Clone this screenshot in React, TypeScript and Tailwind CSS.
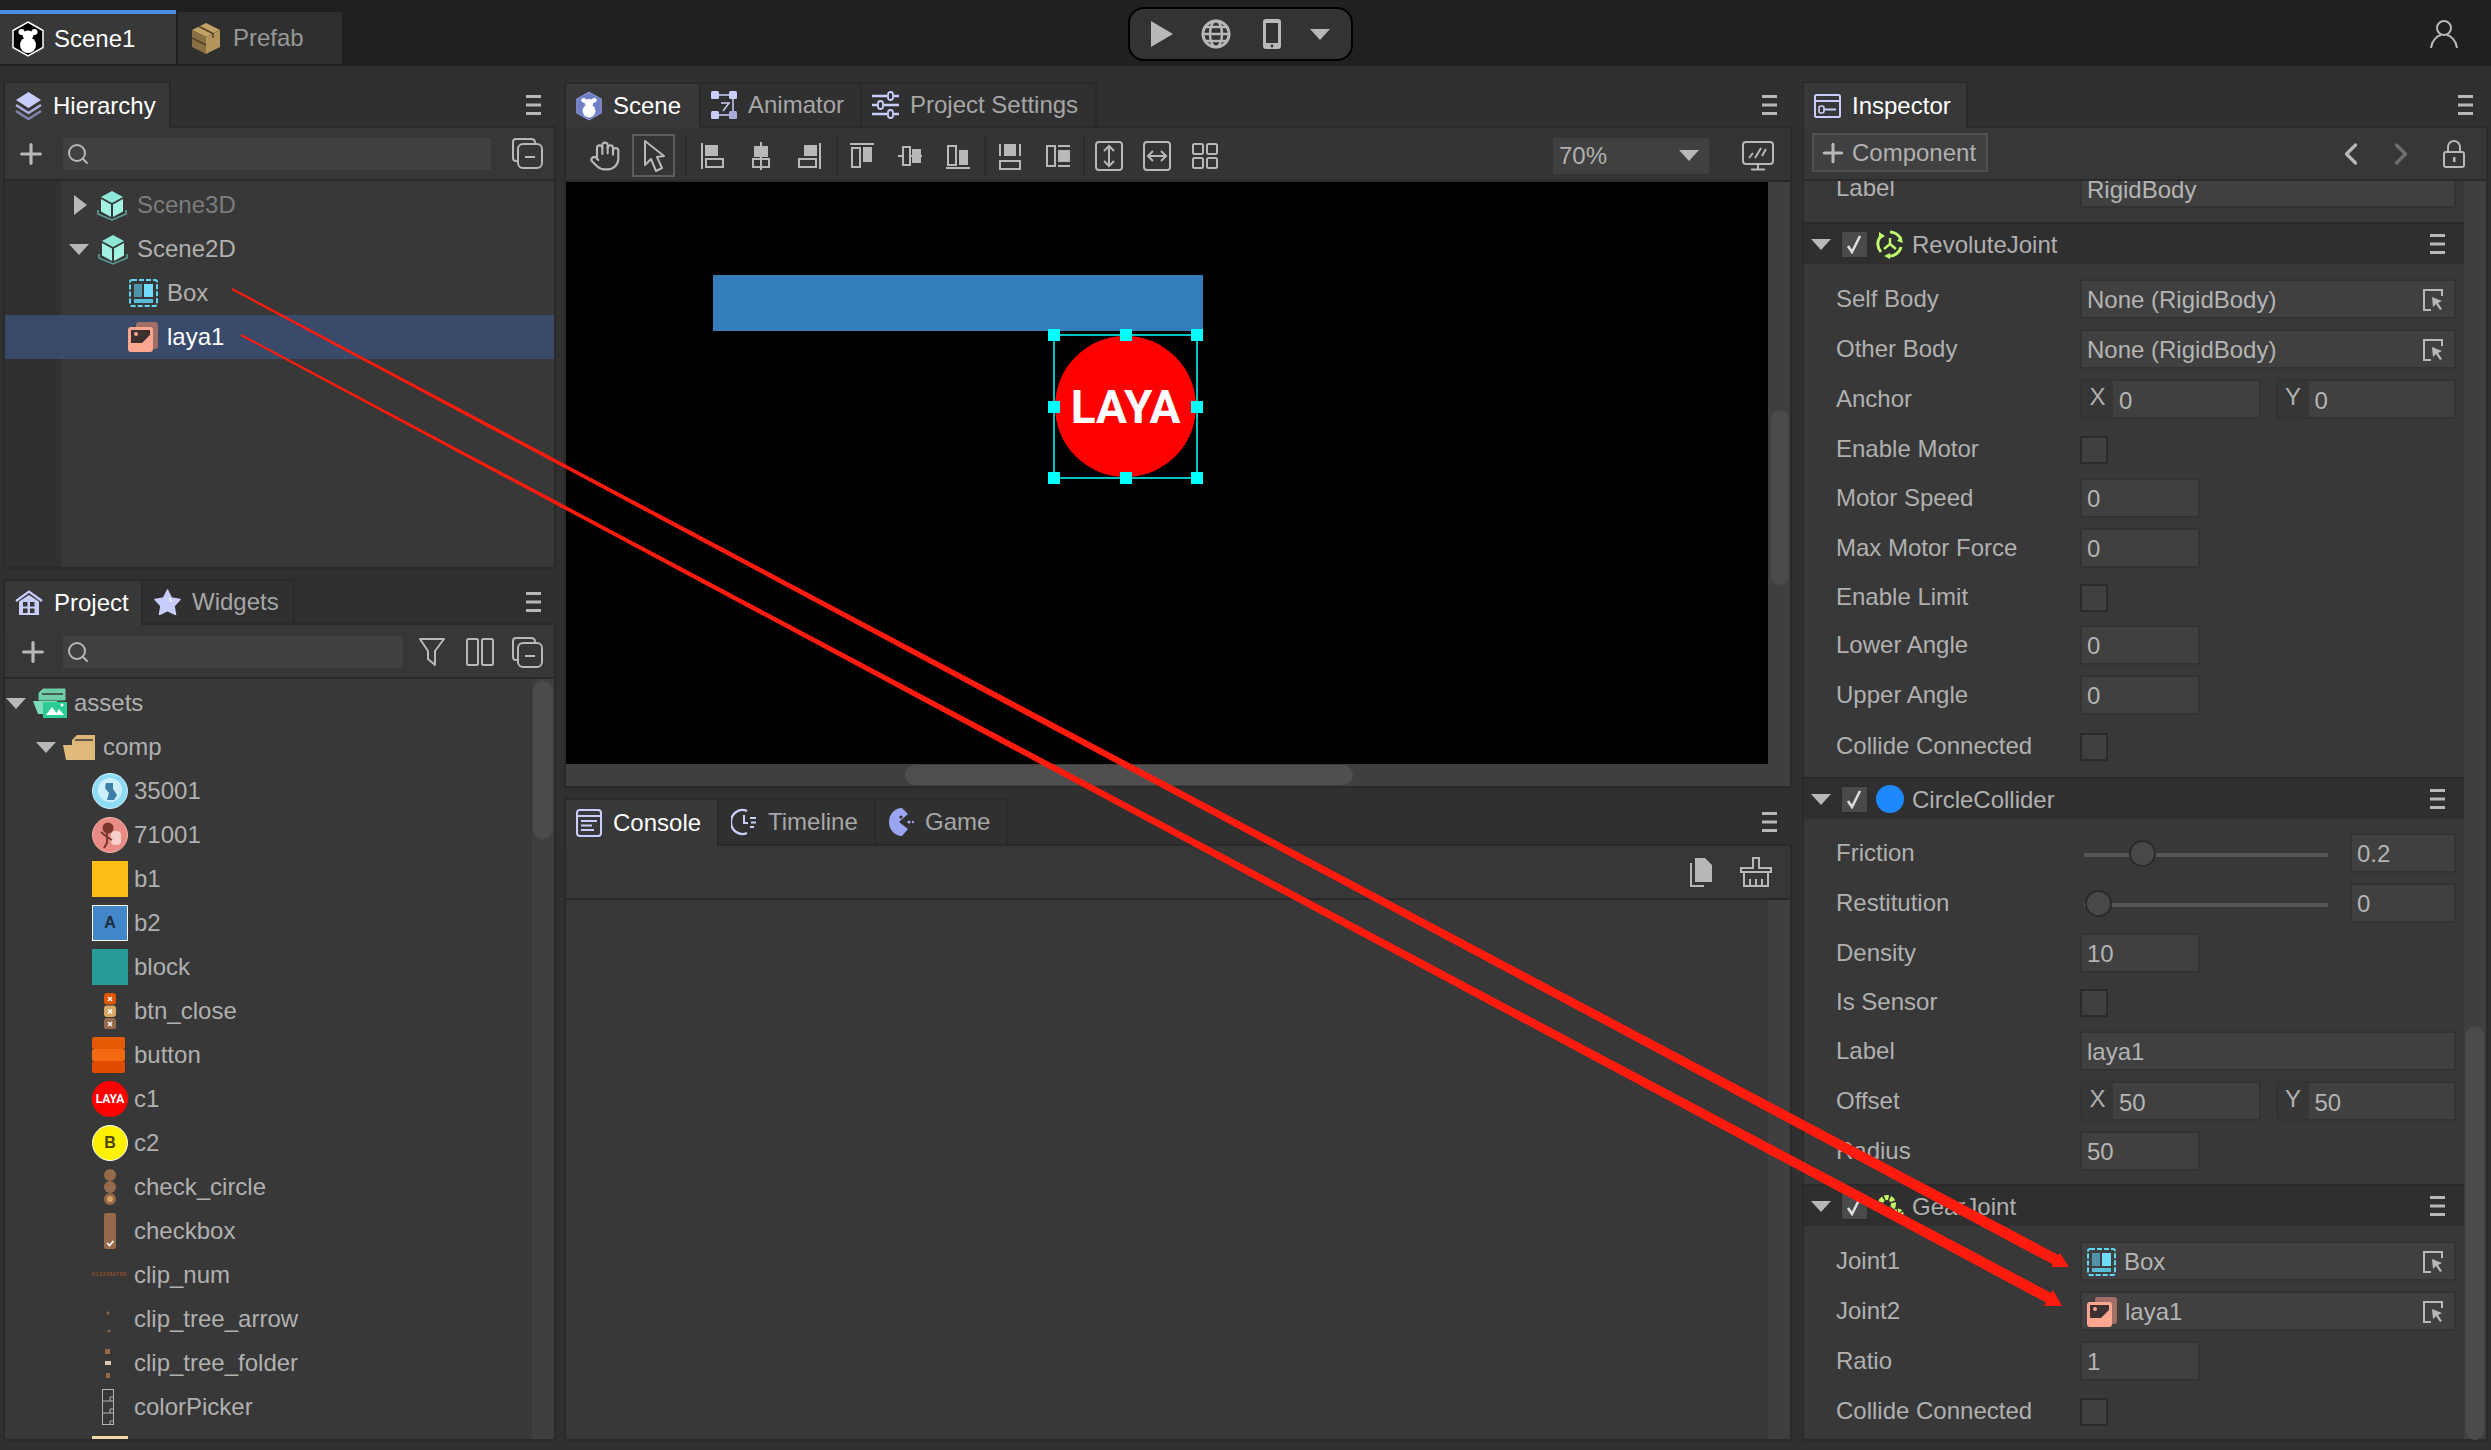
import type { ReactNode } from 'react'
import { Search, Plus, ChevronLeft, ChevronRight, Hand } from 'lucide-react'

const LAV = '#c9cdfb'
const GREY = '#b8b8b8'

function Ic({ w, h, vb, children }: { w: number; h: number; vb?: string; children: ReactNode }) {
  return (
    <svg width={w} height={h} viewBox={vb ?? `0 0 ${w} ${h}`} fill="none" className="shrink-0">
      {children}
    </svg>
  )
}

/* ---------- brand and tab icons ---------- */
function LayaHex({ w = 32, h = 36, fill = '#000', line = '#fff' }: { w?: number; h?: number; fill?: string; line?: string }) {
  return (
    <Ic w={w} h={h} vb="0 0 32 36">
      <polygon points="16,1 31,9.5 31,26.5 16,35 1,26.5 1,9.5" fill={fill} stroke={line} strokeWidth="1.5" />
      <circle cx="16" cy="24" r="8" fill="#fff" />
      <ellipse cx="16" cy="14" rx="5.5" ry="4.5" fill="#fff" />
      <circle cx="9.5" cy="11" r="3" fill="#fff" />
      <circle cx="22.5" cy="11" r="3" fill="#fff" />
    </Ic>
  )
}

const PrefabIcon = () => (
  <Ic w={30} h={33}>
    <polygon points="15,1 29,8 15,15 1,8" fill="#c2a266" />
    <polygon points="1,8 15,15 15,32 1,25" fill="#8a6f42" />
    <polygon points="15,15 29,8 29,25 15,32" fill="#b3945a" />
    <path d="M8 4.5 L22 11.5 L22 16 M1 16 L15 23" stroke="#4e3f27" strokeWidth="1.5" />
  </Ic>
)

const LayersIcon = () => (
  <Ic w={27} h={30}>
    <polygon points="13.5,1 26,9 13.5,17 1,9" fill={LAV} />
    <path d="M1 14 L13.5 22 L26 14" stroke="#a9add8" strokeWidth="2.5" />
    <path d="M1 20 L13.5 28 L26 20" stroke="#8286ad" strokeWidth="2.5" />
  </Ic>
)

const AnimatorIcon = () => (
  <Ic w={26} h={28}>
    <rect x="0" y="0" width="8" height="8" rx="1.5" fill={LAV} />
    <rect x="18" y="0" width="8" height="8" rx="1.5" fill={LAV} />
    <rect x="0" y="20" width="8" height="8" rx="1.5" fill={LAV} />
    <rect x="18" y="20" width="8" height="8" rx="1.5" fill="#a9aedd" />
    <path d="M8 4 H18 M22 8 V20 M8 24 H18 M10 12 H18 L12 20" stroke={LAV} strokeWidth="1.5" />
  </Ic>
)

const SettingsIcon = () => (
  <Ic w={27} h={28}>
    <path d="M0 5 H15 M22 5 H27 M0 14 H5 M12 14 H27 M0 23 H15 M22 23 H27" stroke={LAV} strokeWidth="2.5" />
    <rect x="16" y="1" width="5" height="8" rx="2.5" stroke={LAV} strokeWidth="1.8" />
    <rect x="6" y="10" width="5" height="8" rx="2.5" stroke={LAV} strokeWidth="1.8" />
    <rect x="16" y="19" width="5" height="8" rx="2.5" stroke={LAV} strokeWidth="1.8" />
  </Ic>
)

const InspectorIcon = () => (
  <Ic w={27} h={24}>
    <rect x="1" y="1" width="25" height="22" rx="1.5" stroke={LAV} strokeWidth="2" />
    <path d="M1 7 H26" stroke={LAV} strokeWidth="2" />
    <rect x="5" y="12" width="5" height="7" rx="2" stroke={LAV} strokeWidth="1.6" />
    <path d="M10 15.5 H22" stroke={LAV} strokeWidth="2" />
  </Ic>
)

const HomeIcon = () => (
  <Ic w={28} h={26}>
    <path d="M1 11 L14 1.5 L27 11" stroke={LAV} strokeWidth="2.2" />
    <path d="M4 11.5 L14 5 L24 11.5 V25 H4 Z" fill={LAV} />
    <rect x="8" y="12" width="4.5" height="4.5" fill="#383838" />
    <rect x="15" y="12" width="4.5" height="4.5" fill="#383838" />
    <rect x="8" y="18.5" width="4.5" height="4.5" fill="#383838" />
    <rect x="15" y="18.5" width="4.5" height="4.5" fill="#383838" />
  </Ic>
)

const StarIcon = () => (
  <Ic w={27} h={26}>
    <polygon
      points="13.5,1 17.5,9 26,10.5 20,17 21.5,25.5 13.5,21.5 5.5,25.5 7,17 1,10.5 9.5,9"
      fill={LAV}
      stroke={LAV}
      strokeWidth="1.5"
      strokeLinejoin="round"
    />
    <path d="M15.5 9 L18 13" stroke="#fff" strokeWidth="1.2" />
  </Ic>
)

const ConsoleIcon = () => (
  <Ic w={26} h={28}>
    <rect x="1" y="1" width="24" height="26" rx="3" stroke={LAV} strokeWidth="2" />
    <path d="M1 7 H25" stroke={LAV} strokeWidth="2" />
    <path d="M5 12 H21 M5 16.5 H16 M5 21 H18" stroke={LAV} strokeWidth="2.2" />
  </Ic>
)

const ClockIcon = () => (
  <Ic w={26} h={28}>
    <path d="M16 3 A11.5 12 0 1 0 16 25" stroke={LAV} strokeWidth="2.4" />
    <path d="M13 7 V15 H17 M19 10 H25 M20 14.5 H25 M19 19 H23" stroke={LAV} strokeWidth="2" />
  </Ic>
)

const GameIcon = () => (
  <Ic w={26} h={30}>
    <path d="M14 1 A13 14 0 1 0 14 29 L20 22 L11 15 L20 7 Z" fill="#9aa5f2" />
    <circle cx="13" cy="10" r="1.6" fill="#2f2f2f" />
    <circle cx="21" cy="15" r="1.6" fill="#9aa5f2" />
    <circle cx="25" cy="15" r="1.2" fill="#9aa5f2" />
  </Ic>
)

/* ---------- generic tool icons ---------- */
const MenuIcon = () => (
  <Ic w={15} h={20}>
    <path d="M0 1.5 H15 M0 10 H15 M0 18.5 H15" stroke={GREY} strokeWidth="3" />
  </Ic>
)

const SearchIcon = () => <Search size={24} strokeWidth={2} color={GREY} className="shrink-0" />
const PlusIcon = () => <Plus size={32} strokeWidth={2.4} color={GREY} className="shrink-0" />

const CollapseIcon = () => (
  <Ic w={31} h={31}>
    <path d="M5 23 H4 Q1 23 1 20 V4 Q1 1 4 1 H19 Q23 1 23 5" stroke={GREY} strokeWidth="2" />
    <rect x="6" y="6" width="24" height="24" rx="5" stroke={GREY} strokeWidth="2" />
    <path d="M13 19 H23" stroke={GREY} strokeWidth="2" />
  </Ic>
)

const FilterIcon = () => (
  <Ic w={26} h={28}>
    <path d="M1 1 H25 L16 13 V27 L9 21 V13 Z" stroke={GREY} strokeWidth="2" strokeLinejoin="round" />
  </Ic>
)

const ColumnsIcon = () => (
  <Ic w={28} h={28}>
    <rect x="1" y="1" width="11" height="26" rx="1.5" stroke={GREY} strokeWidth="2" />
    <rect x="16" y="1" width="11" height="26" rx="1.5" stroke={GREY} strokeWidth="2" />
  </Ic>
)

const Triangle = ({ dir = 'down', color = GREY }: { dir?: 'down' | 'right'; color?: string }) =>
  dir === 'down' ? (
    <Ic w={20} h={11}>
      <polygon points="0,0 20,0 10,11" fill={color} />
    </Ic>
  ) : (
    <Ic w={13} h={20}>
      <polygon points="0,0 13,10 0,20" fill={color} />
    </Ic>
  )

function AlignIcon({ kind }: { kind: string }) {
  const o = { stroke: GREY, strokeWidth: 2 }
  const fill = GREY
  return (
    <Ic w={24} h={28}>
      {kind === 'left' && (
        <>
          <path d="M1 1 V27" {...o} />
          <rect x="4" y="3" width="13" height="11" fill={fill} />
          <rect x="5" y="17" width="17" height="8" {...o} />
        </>
      )}
      {kind === 'hcenter' && (
        <>
          <path d="M12 0 V28" {...o} />
          <rect x="5" y="4" width="14" height="11" fill={fill} />
          <rect x="4" y="17" width="16" height="8" {...o} />
        </>
      )}
      {kind === 'right' && (
        <>
          <path d="M23 1 V27" {...o} />
          <rect x="7" y="3" width="13" height="11" fill={fill} />
          <rect x="2" y="17" width="17" height="8" {...o} />
        </>
      )}
      {kind === 'top' && (
        <>
          <path d="M0 2 H24" {...o} />
          <rect x="2" y="6" width="8" height="19" {...o} />
          <rect x="13" y="5" width="9" height="15" fill={fill} />
        </>
      )}
      {kind === 'vcenter' && (
        <>
          <path d="M0 14 H24" {...o} />
          <rect x="5" y="5" width="7" height="18" fill="#343434" {...o} />
          <rect x="14" y="7" width="9" height="14" fill={fill} />
        </>
      )}
      {kind === 'bottom' && (
        <>
          <path d="M0 26 H24" {...o} />
          <rect x="2" y="4" width="8" height="19" {...o} />
          <rect x="13" y="8" width="9" height="15" fill={fill} />
        </>
      )}
      {kind === 'disv' && (
        <>
          <path d="M2 2 V14 M22 2 V14" {...o} />
          <rect x="6" y="2" width="12" height="12" fill={fill} />
          <rect x="2" y="19" width="20" height="8" {...o} />
        </>
      )}
      {kind === 'dish' && (
        <>
          <rect x="1" y="4" width="8" height="20" {...o} />
          <path d="M12 4 H24 M12 24 H24" {...o} />
          <rect x="12" y="8" width="12" height="12" fill={fill} />
        </>
      )}
    </Ic>
  )
}

const SizeV = () => (
  <Ic w={28} h={30}>
    <rect x="1" y="1" width="26" height="28" rx="3" stroke={GREY} strokeWidth="2" />
    <path d="M14 6 V24 M9 10 L14 5 L19 10 M9 20 L14 25 L19 20" stroke={GREY} strokeWidth="2" />
  </Ic>
)
const SizeH = () => (
  <Ic w={28} h={30}>
    <rect x="1" y="1" width="26" height="28" rx="3" stroke={GREY} strokeWidth="2" />
    <path d="M5 15 H23 M10 10 L5 15 L10 20 M18 10 L23 15 L18 20" stroke={GREY} strokeWidth="2" />
  </Ic>
)
const GridIcon = () => (
  <Ic w={26} h={26}>
    <rect x="1" y="1" width="10" height="10" rx="1.5" stroke={GREY} strokeWidth="2" />
    <rect x="15" y="1" width="10" height="10" rx="1.5" stroke={GREY} strokeWidth="2" />
    <rect x="1" y="15" width="10" height="10" rx="1.5" stroke={GREY} strokeWidth="2" />
    <rect x="15" y="15" width="10" height="10" rx="1.5" stroke={GREY} strokeWidth="2" />
  </Ic>
)
const PointerIcon = () => (
  <Ic w={22} h={34}>
    <path d="M2 2 V26 L8 20 L13 32 L19 29 L14 18 L21 17 Z" stroke={GREY} strokeWidth="2" strokeLinejoin="round" />
  </Ic>
)
const MonitorIcon = () => (
  <Ic w={32} h={30}>
    <rect x="1" y="1" width="30" height="22" rx="3" stroke={GREY} strokeWidth="2" />
    <path d="M7 17 L11 12 M13 17 L19 7 M20 15 L24 8 M16 23 V28 M9 28.5 H23" stroke={GREY} strokeWidth="2" />
  </Ic>
)
const CopyIcon = () => (
  <Ic w={23} h={30}>
    <path d="M1 6 V29 H14" stroke={GREY} strokeWidth="2" />
    <path d="M5 1 H15 L22 8 V25 H5 Z" fill={GREY} />
  </Ic>
)
const BrushIcon = () => (
  <Ic w={34} h={30}>
    <path d="M14 1 H20 V11 H32 V15 H2 V11 H14 Z" stroke={GREY} strokeWidth="2" />
    <path d="M5 15 V29 H29 V15 M11 22 V29 M17 22 V29 M23 22 V29" stroke={GREY} strokeWidth="2" />
  </Ic>
)
const PickIcon = () => (
  <Ic w={20} h={22}>
    <path d="M19 7 V1 H1 V21 H8" stroke={GREY} strokeWidth="2" />
    <path d="M9 8 L19 12 L15 14 L19 20 L17 21 L13 15 L10 18 Z" fill={GREY} />
  </Ic>
)
const LockIcon = () => (
  <Ic w={22} h={28}>
    <path d="M5 12 V7 A6 6 0 0 1 17 7 V12" stroke={GREY} strokeWidth="2" />
    <rect x="1" y="12" width="20" height="15" rx="2" stroke={GREY} strokeWidth="2" />
    <rect x="10" y="17" width="2.5" height="5" fill={GREY} />
  </Ic>
)
const UserIcon = () => (
  <Ic w={28} h={30}>
    <circle cx="14" cy="9" r="7" stroke={GREY} strokeWidth="2" />
    <path d="M1 29 C2 21 7 17 11 16 M27 29 C26 21 21 17 17 16" stroke={GREY} strokeWidth="2" />
  </Ic>
)
const PlayIcon = () => (
  <Ic w={24} h={28}>
    <polygon points="1,1 23,14 1,27" fill={GREY} />
  </Ic>
)
const GlobeIcon = () => (
  <Ic w={30} h={30}>
    <circle cx="15" cy="15" r="13" stroke={GREY} strokeWidth="3" />
    <ellipse cx="15" cy="15" rx="6" ry="13" stroke={GREY} strokeWidth="2.5" />
    <path d="M2 15 H28 M4 8 H26 M4 22 H26" stroke={GREY} strokeWidth="2.5" />
  </Ic>
)
const PhoneIcon = () => (
  <Ic w={18} h={30}>
    <rect x="0" y="0" width="18" height="30" rx="3" fill={GREY} />
    <rect x="3" y="4" width="12" height="20" fill="#333" />
    <circle cx="9" cy="27" r="1.4" fill="#333" />
  </Ic>
)

/* ---------- tree and asset icons ---------- */
const CubeIcon = () => (
  <Ic w={30} h={31}>
    <path d="M1 20 V24 L15 30 L29 24 V20" stroke="#5c9c93" strokeWidth="1.6" />
    <polygon points="15,1 26,7 15,13 4,7" fill="#8ee8d8" />
    <polygon points="4,9 14,14.5 14,27 4,21.5" fill="#a3f1e3" />
    <polygon points="26,9 16,14.5 16,27 26,21.5" fill="#a3f1e3" />
  </Ic>
)
const BoxNodeIcon = () => (
  <Ic w={29} h={28}>
    <rect x="1" y="1" width="27" height="26" rx="2" stroke="#5fd6f2" strokeWidth="2" strokeDasharray="5 2" />
    <rect x="5" y="5" width="8" height="13" fill="#4f94a8" />
    <rect x="15" y="5" width="9" height="13" fill="#71dcfa" />
    <rect x="5" y="20" width="19" height="4" fill="#58bdd8" />
  </Ic>
)
const ImageNodeIcon = () => (
  <Ic w={30} h={30}>
    <rect x="8" y="0" width="22" height="27" rx="3" fill="#a07067" />
    <rect x="0" y="5" width="25" height="25" rx="3" fill="#ffa690" />
    <rect x="3" y="8" width="19" height="13" fill="#3c3030" />
    <circle cx="8" cy="12" r="2" fill="#ffa690" />
    <path d="M3 21 L14 21 L22 13 V21 Z" fill="#ffa690" />
  </Ic>
)
const FolderImgIcon = () => (
  <Ic w={34} h={30}>
    <path d="M6 5 L10 1 H32 V12 H6 Z" fill="#6fcda9" stroke="#6fcda9" />
    <path d="M9 6 H30" stroke="#383838" strokeWidth="1.5" />
    <polygon points="0,13 24,13 26,26 5,26" fill="#7fdcb9" />
    <rect x="10" y="14" width="24" height="16" fill="#2dcb95" />
    <polygon points="13,27 19,19 25,27" fill="#fff" />
    <polygon points="22,27 26,21 31,27" fill="#fff" />
    <circle cx="29" cy="17" r="1.5" fill="#fff" />
  </Ic>
)
const FolderIcon = () => (
  <Ic w={33} h={25}>
    <path d="M9 5 L14 0 H32 V12 H9 Z" fill="#dcb679" />
    <path d="M12 5 H30" stroke="#383838" strokeWidth="1.5" />
    <polygon points="0,10 32,10 32,25 3,25" fill="#dfba7b" />
  </Ic>
)

function Thumb({ name }: { name: string }) {
  if (name === '35001')
    return (
      <Ic w={36} h={36}>
        <circle cx="18" cy="18" r="17.5" fill="#8fdcf6" stroke="#c9f1ff" />
        <circle cx="18" cy="17" r="12" fill="#cdeffc" />
        <path d="M14 10 H21 V16 L25 22 L22 27 H15 L17 20 L13 15 Z" fill="#3d7fa8" />
      </Ic>
    )
  if (name === '71001')
    return (
      <Ic w={36} h={36}>
        <circle cx="18" cy="18" r="17.5" fill="#e88c85" stroke="#f2b0a8" />
        <rect x="19" y="14" width="10" height="14" rx="4" fill="#f6cfc8" />
        <circle cx="16" cy="11" r="5.5" fill="#7c352e" />
        <path d="M15 16 V26 L12 31 M15 20 L9 15 M15 20 L20 23" stroke="#7c352e" strokeWidth="2" />
      </Ic>
    )
  if (name === 'b1') return <div className="w-[36px] h-[36px] bg-[#fdbd16]" />
  if (name === 'b2')
    return (
      <div className="w-[36px] h-[36px] bg-[#4287c9] border border-white flex items-center justify-center text-[#1e2c3e] text-[16px] font-bold">
        A
      </div>
    )
  if (name === 'block') return <div className="w-[36px] h-[36px] bg-[#259c99]" />
  if (name === 'btn_close')
    return (
      <Ic w={36} h={36}>
        {[
          ['#e35400', 0],
          ['#d7a662', 12.5],
          ['#96694a', 25],
        ].map(([c, y]) => (
          <g key={String(c)}>
            <rect x="12" y={Number(y)} width="12" height="11.5" rx="3" fill={String(c)} />
            <path d={`M16 ${Number(y) + 4} l4 4 m0 -4 l-4 4`} stroke="#fff" strokeWidth="1.4" />
          </g>
        ))}
      </Ic>
    )
  if (name === 'button')
    return (
      <Ic w={36} h={36}>
        <rect x="0" y="0" width="33" height="12" rx="2" fill="#e35a00" />
        <rect x="0" y="12" width="33" height="12" rx="2" fill="#f46a10" />
        <rect x="0" y="24" width="33" height="12" rx="2" fill="#e04b00" />
      </Ic>
    )
  if (name === 'c1')
    return (
      <div className="w-[36px] h-[36px] rounded-full bg-[#ff0000] flex items-center justify-center text-white text-[12px] font-bold font-['Roboto',sans-serif]">
        LAYA
      </div>
    )
  if (name === 'c2')
    return (
      <div className="w-[36px] h-[36px] rounded-full bg-[#fff200] border border-white flex items-center justify-center text-[#4a4410] text-[16px] font-bold">
        B
      </div>
    )
  if (name === 'check_circle')
    return (
      <Ic w={36} h={36}>
        <circle cx="18" cy="6" r="6" fill="#96694a" />
        <circle cx="18" cy="18" r="6" fill="#96694a" />
        <circle cx="18" cy="30" r="6" fill="#96694a" />
        <circle cx="18" cy="30" r="3" fill="#d7a662" />
      </Ic>
    )
  if (name === 'checkbox')
    return (
      <Ic w={36} h={36}>
        <rect x="12" y="0" width="12" height="36" rx="2" fill="#96694a" />
        <path d="M15 30 l2.5 2.5 l4 -4.5" stroke="#fff" strokeWidth="1.6" />
      </Ic>
    )
  if (name === 'clip_num')
    return (
      <div className="w-[36px] text-[5px] leading-none whitespace-nowrap text-[#b85a20] tracking-[0.7px] -mt-[2px]">
        0123456789
      </div>
    )
  if (name === 'clip_tree_arrow')
    return (
      <Ic w={36} h={36}>
        <polygon points="15,10 18,12 15,14" fill="#96694a" />
        <polygon points="15,29 19,29 17,32" fill="#96694a" />
      </Ic>
    )
  if (name === 'clip_tree_folder')
    return (
      <Ic w={36} h={36}>
        <rect x="13" y="4" width="5" height="5" fill="#96694a" />
        <rect x="13" y="16" width="6" height="4" fill="#e0c9b0" />
        <rect x="14" y="28" width="4" height="5" fill="#96694a" />
      </Ic>
    )
  if (name === 'colorPicker')
    return (
      <Ic w={36} h={36}>
        <rect x="10.5" y="0.5" width="11" height="35" stroke="#b5b5b5" />
        <path d="M10 12 H22 M10 24 H22 M18 12 V8 H22 M18 24 V20 H22 M18 36 V32 H22" stroke="#b5b5b5" />
      </Ic>
    )
  return <div className="w-[36px] h-[36px] bg-[#efd9a6]" />
}

/* ---------- panel parts ---------- */
function Tab({ icon, label, active, w, pl = 'pl-[10px]' }: { icon: ReactNode; label: string; active?: boolean; w: string; pl?: string }) {
  return (
    <div
      className={`${w} ${pl} h-full relative z-10 flex items-center gap-[11px] border-t-2 border-r-2 border-[#2a2a2a] ${
        active ? 'bg-[#383838] text-white' : 'bg-[#303030] text-[#a6a6a6] border-b-2'
      }`}
    >
      {icon}
      <span>{label}</span>
    </div>
  )
}

function TabBar({ h, children }: { h: string; children: ReactNode }) {
  return (
    <div className={`${h} flex justify-between shrink-0`}>
      <div className="flex h-full border-l-2 border-[#2a2a2a]">{children}</div>
      <div className="flex items-center pr-[15px]">
        <MenuIcon />
      </div>
    </div>
  )
}

function TreeRow({ pl, icon, label, tone = 'text-[#b0b0b0]', selected }: { pl: string; icon: ReactNode; label: string; tone?: string; selected?: boolean }) {
  return (
    <div className={`h-[44px] flex items-center shrink-0 ${pl} ${selected ? 'bg-[#3b4c70]/90' : ''}`}>
      {icon}
      <span className={tone}>{label}</span>
    </div>
  )
}

function Field({ children, w = 'flex-1', trailing }: { children: ReactNode; w?: string; trailing?: ReactNode }) {
  return (
    <div className={`${w} h-[40px] flex items-center bg-[#404040] border-2 border-[#333333] pl-[5px] pt-[1px] text-[#b4b4b4]`}>
      <div className="flex-1 flex items-center gap-[8px]">{children}</div>
      {trailing && <div className="pr-[11px]">{trailing}</div>}
    </div>
  )
}

function Row({ label, children, check, h }: { label: string; children?: ReactNode; check?: boolean; h?: string }) {
  return (
    <div className={`flex items-center pl-[32px] pr-[8px] shrink-0 ${h ?? 'h-[50px]'}`}>
      <span className="w-[244px] whitespace-nowrap">{label}</span>
      {check ? <div className="w-[28px] h-[28px] mt-[2px] bg-[#404040] border-2 border-[#2b2b2b]" /> : children}
    </div>
  )
}

const Num = ({ v }: { v: string }) => <Field w="w-[120px]">{v}</Field>

function Ref({ icon, label }: { icon?: ReactNode; label: string }) {
  return (
    <Field trailing={<PickIcon />}>
      {icon}
      {label}
    </Field>
  )
}

function Cell({ k, v }: { k: string; v: string }) {
  return (
    <div className="flex-1 h-[40px] flex border-2 border-[#333333] bg-[#363636]">
      <span className="w-[31px] text-center leading-[32px]">{k}</span>
      <span className="flex-1 bg-[#404040] pl-[6px] pt-[2px] leading-[36px] text-[#b4b4b4]">{v}</span>
    </div>
  )
}

function XY({ x, y }: { x: string; y: string }) {
  return (
    <div className="flex-1 flex gap-[15px]">
      <Cell k="X" v={x} />
      <Cell k="Y" v={y} />
    </div>
  )
}

function Slider({ left, v }: { left: string; v: string }) {
  return (
    <>
      <div className="relative w-[244px] ml-[4px] mr-[22px] h-[27px] flex items-center">
        <div className="w-full h-[4px] mt-[4px] bg-[#565656]" />
        <div className={`absolute ${left} top-0 w-[27px] h-[27px] rounded-full bg-[#484848] border-2 border-[#2a2a2a]`} />
      </div>
      <Field w="w-[106px]">{v}</Field>
    </>
  )
}

function SectionHeader({ icon, title }: { icon: ReactNode; title: string }) {
  return (
    <div className="h-[42px] shrink-0 flex items-center bg-[#2f2f2f] border-t-2 border-[#2a2a2a] text-[#b0b0b0]">
      <div className="ml-[7px]">
        <Triangle />
      </div>
      <div className="ml-[10px] w-[27px] h-[27px] bg-[#4a4a4a] border border-[#2b2b2b] flex items-center justify-center">
        <Ic w={17} h={19}>
          <path d="M2 11 L6 17 L14 1" stroke="#dcdcdc" strokeWidth="2.6" />
        </Ic>
      </div>
      <div className="w-[44px] flex justify-center">{icon}</div>
      <span className="flex-1 pt-[1px]">{title}</span>
      <div className="pr-[19px]">
        <MenuIcon />
      </div>
    </div>
  )
}

const RevoluteIcon = () => (
  <Ic w={28} h={30}>
    <path d="M14 3 A12 12 0 0 1 25 11 M25 18 A12 12 0 0 1 12 27 M5 23 A12 12 0 0 1 4 8" stroke="#bff96e" strokeWidth="3" />
    <polygon points="3,3 9,7 3,11" fill="#bff96e" />
    <polygon points="25,7 27,14 21,12" fill="#bff96e" />
    <polygon points="8,27 14,24 14,30" fill="#bff96e" />
    <path d="M14 9 L14 15 L8 20 M14 15 L20 20" stroke="#bff96e" strokeWidth="2.4" />
  </Ic>
)
const GearIcon = () => (
  <Ic w={28} h={28}>
    <circle cx="11" cy="12" r="6.5" stroke="#c3f765" strokeWidth="5" strokeDasharray="4 1.5" />
    <circle cx="22" cy="22" r="3.5" stroke="#c3f765" strokeWidth="4" strokeDasharray="3 1" />
  </Ic>
)

/* the two annotation arrows: a tapered line and a head */
function Arrow({ x0, y0, x1, y1, head }: { x0: number; y0: number; x1: number; y1: number; head: string }) {
  const len = Math.hypot(x1 - x0, y1 - y0)
  const nx = -(y1 - y0) / len
  const ny = (x1 - x0) / len
  const a = 1
  const b = 5.5
  const pts = [
    [x0 + nx * a, y0 + ny * a],
    [x1 + nx * b, y1 + ny * b],
    [x1 - nx * b, y1 - ny * b],
    [x0 - nx * a, y0 - ny * a],
  ]
    .map(p => p.join(','))
    .join(' ')
  return (
    <>
      <polygon points={pts} fill="#ff1b0d" />
      <polygon points={head} fill="#ff1b0d" />
    </>
  )
}

const Sep = ({ m }: { m: string }) => <div className={`w-[2px] h-[38px] bg-[#2c2c2c] ${m}`} />
const Slot = ({ children }: { children: ReactNode }) => <div className="w-[48px] flex justify-center">{children}</div>

const assets = [
  '35001',
  '71001',
  'b1',
  'b2',
  'block',
  'btn_close',
  'button',
  'c1',
  'c2',
  'check_circle',
  'checkbox',
  'clip_num',
  'clip_tree_arrow',
  'clip_tree_folder',
  'colorPicker',
]

const handleSpots = [
  'left-[-7px] top-[-7px]',
  'left-[65px] top-[-7px]',
  'left-[136px] top-[-7px]',
  'left-[-7px] top-[65px]',
  'left-[136px] top-[65px]',
  'left-[-7px] top-[136px]',
  'left-[65px] top-[136px]',
  'left-[136px] top-[136px]',
]

export default function App() {
  return (
    <div className="relative w-[2491px] h-[1450px] overflow-hidden flex flex-col bg-[#303030] font-['Liberation_Sans',Arial,sans-serif] text-[24px] leading-none text-[#b0b0b0]">
      {/* Top bar */}
      <div className="h-[66px] shrink-0 bg-[#202020] flex items-start">
        <div className="w-[1128px] h-[64px] pt-[10px] flex gap-[2px]">
          <div className="w-[176px] bg-[#383838] border-t-4 border-[#4a90e2] flex items-center gap-[10px] pl-[12px] text-white">
            <LayaHex />
            <span>Scene1</span>
          </div>
          <div className="w-[164px] mt-[2px] bg-[#2f2f2f] flex items-center gap-[12px] pl-[13px] text-[#979797]">
            <PrefabIcon />
            <span>Prefab</span>
          </div>
        </div>
        <div className="w-[225px] h-[54px] mt-[7px] rounded-[16px] border-2 border-black bg-[#333333] flex items-center pl-[20px] gap-[20px]">
          <PlayIcon />
          <div className="ml-[7px]">
            <GlobeIcon />
          </div>
          <div className="ml-[12px]">
            <PhoneIcon />
          </div>
          <div className="ml-[9px]">
            <Triangle />
          </div>
        </div>
        <div className="flex-1 flex justify-end pr-[33px] pt-[19px]">
          <UserIcon />
        </div>
      </div>

      {/* Dock */}
      <div className="flex-1 flex pt-[15px] pb-[9px] pl-[3px] min-h-0">
        {/* Left column */}
        <div className="w-[553px] flex flex-col gap-[10px] shrink-0">
          <div className="h-[488px] flex flex-col shrink-0">
            <TabBar h="h-[47px]">
              <Tab w="w-[166px]" active label="Hierarchy" icon={<LayersIcon />} />
            </TabBar>
            <div className="flex-1 min-h-0 flex flex-col border-2 border-[#2a2a2a] -mt-[2px]">
              <div className="h-[53px] shrink-0 flex items-center bg-[#373737] border-b-2 border-[#2a2a2a] pl-[10px]">
                <PlusIcon />
                <div className="w-[428px] h-[32px] ml-[16px] mr-[21px] bg-[#404040] pl-[3px] flex items-center">
                  <SearchIcon />
                </div>
                <CollapseIcon />
              </div>
              <div className="flex-1 min-h-0 pt-[2px] overflow-hidden flex flex-col bg-[linear-gradient(to_right,#303030_56px,#383838_56px)]">
                <TreeRow
                  pl="pl-[69px] gap-[10px]"
                  tone="text-[#7d7d7d]"
                  label="Scene3D"
                  icon={
                    <>
                      <Triangle dir="right" />
                      <CubeIcon />
                    </>
                  }
                />
                <TreeRow
                  pl="pl-[64px] gap-[9px]"
                  label="Scene2D"
                  icon={
                    <>
                      <Triangle />
                      <CubeIcon />
                    </>
                  }
                />
                <TreeRow pl="pl-[124px] gap-[9px]" label="Box" icon={<BoxNodeIcon />} />
                <TreeRow pl="pl-[123px] gap-[9px]" label="laya1" tone="text-white" selected icon={<ImageNodeIcon />} />
              </div>
            </div>
          </div>

          <div className="flex-1 min-h-0 flex flex-col">
            <TabBar h="h-[46px]">
              <Tab w="w-[138px]" active label="Project" icon={<HomeIcon />} />
              <Tab w="w-[152px]" pl="pl-[11px]" label="Widgets" icon={<StarIcon />} />
            </TabBar>
            <div className="flex-1 min-h-0 flex flex-col border-2 border-[#2a2a2a] -mt-[2px]">
              <div className="h-[54px] shrink-0 flex items-center bg-[#373737] border-b-2 border-[#2a2a2a] pl-[12px] pt-[2px]">
                <PlusIcon />
                <div className="w-[340px] h-[32px] ml-[14px] bg-[#404040] pl-[3px] flex items-center">
                  <SearchIcon />
                </div>
                <div className="ml-[16px]">
                  <FilterIcon />
                </div>
                <div className="ml-[21px]">
                  <ColumnsIcon />
                </div>
                <div className="ml-[18px]">
                  <CollapseIcon />
                </div>
              </div>
              <div className="flex-1 min-h-0 flex bg-[#383838]">
                <div className="flex-1 min-w-0 pt-[2px] overflow-hidden flex flex-col">
                  <TreeRow
                    pl="pl-[1px] gap-[7px]"
                    label="assets"
                    icon={
                      <>
                        <Triangle />
                        <FolderImgIcon />
                      </>
                    }
                  />
                  <TreeRow
                    pl="pl-[31px] gap-[7px]"
                    label="comp"
                    icon={
                      <>
                        <Triangle />
                        <FolderIcon />
                      </>
                    }
                  />
                  {assets.map(a => (
                    <TreeRow key={a} pl="pl-[87px] gap-[6px]" label={a} icon={<div className="w-[36px] h-[36px] flex items-center"><Thumb name={a} /></div>} />
                  ))}
                  <div className="pl-[87px] pt-[7px]">
                    <Thumb name="next" />
                  </div>
                </div>
                <div className="w-[22px] shrink-0 bg-[#3f3f3f] pt-[2px] px-[1px]">
                  <div className="h-[158px] rounded-[10px] bg-[#4b4b4b]" />
                </div>
              </div>
            </div>
          </div>
        </div>

        {/* Centre column */}
        <div className="w-[1228px] ml-[8px] flex flex-col gap-[10px] shrink-0">
          <div className="h-[706px] flex flex-col shrink-0 mt-[1px]">
            <TabBar h="h-[46px]">
              <Tab w="w-[135px]" active label="Scene" icon={<LayaHex w={26} h={30} fill="#6f7fc6" line="#8793d0" />} />
              <Tab w="w-[161px]" label="Animator" icon={<AnimatorIcon />} />
              <Tab w="w-[235px]" label="Project Settings" icon={<SettingsIcon />} />
            </TabBar>
            <div className="flex-1 min-h-0 flex flex-col border-2 border-[#2a2a2a] -mt-[2px]">
              <div className="h-[54px] shrink-0 flex items-center bg-[#343434] border-b-2 border-[#2a2a2a] pl-[15px] pt-[3px]">
                <div className="w-[48px] flex justify-center">
                  <Hand size={32} strokeWidth={1.6} color={GREY} />
                </div>
                <div className="ml-[3px] w-[43px] h-[43px] border-2 border-[#5c5c5c] flex items-center justify-center">
                  <PointerIcon />
                </div>
                <Sep m="ml-[10px] mr-[2px]" />
                <Slot><AlignIcon kind="left" /></Slot>
                <Slot><AlignIcon kind="hcenter" /></Slot>
                <Slot><AlignIcon kind="right" /></Slot>
                <Sep m="ml-[3px]" />
                <Slot><AlignIcon kind="top" /></Slot>
                <Slot><AlignIcon kind="vcenter" /></Slot>
                <Slot><AlignIcon kind="bottom" /></Slot>
                <Sep m="ml-[2px]" />
                <Slot><AlignIcon kind="disv" /></Slot>
                <Slot><AlignIcon kind="dish" /></Slot>
                <Sep m="ml-[1px]" />
                <Slot><SizeV /></Slot>
                <Slot><SizeH /></Slot>
                <Slot><GridIcon /></Slot>
                <div className="ml-auto w-[156px] h-[36px] bg-[#404040] flex items-center justify-between pl-[6px] pr-[10px]">
                  <span>70%</span>
                  <Triangle />
                </div>
                <div className="w-[81px] flex justify-center pl-[16px]">
                  <MonitorIcon />
                </div>
              </div>
              <div className="flex-1 min-h-0 flex">
                <div className="flex-1 min-w-0 flex flex-col">
                  <div className="relative flex-1 min-h-0 bg-black">
                    <div className="absolute left-[147px] top-[93px] w-[490px] h-[56px] bg-[#327dba]" />
                    <div className="absolute left-[487px] top-[152px] w-[145px] h-[145px] border-2 border-[#00c4c4]">
                      <div className="w-full h-full rounded-full bg-[#ff0000] flex items-center justify-center text-white text-[46px] font-bold font-['Roboto',sans-serif]">
                        LAYA
                      </div>
                      {handleSpots.map(s => (
                        <div key={s} className={`absolute ${s} w-[12px] h-[12px] bg-[#00ffff]`} />
                      ))}
                    </div>
                  </div>
                  <div className="h-[22px] shrink-0 bg-[#3f3f3f] pl-[339px] pt-[1px]">
                    <div className="w-[448px] h-[20px] rounded-[10px] bg-[#4f4f4f]" />
                  </div>
                </div>
                <div className="w-[22px] shrink-0 bg-[#3f3f3f] pt-[228px] pl-[3px] pr-[1px]">
                  <div className="h-[175px] rounded-[9px] bg-[#4b4b4b]" />
                </div>
              </div>
            </div>
          </div>

          <div className="flex-1 min-h-0 flex flex-col">
            <TabBar h="h-[48px]">
              <Tab w="w-[153px]" active label="Console" icon={<ConsoleIcon />} />
              <Tab w="w-[157px]" pl="pl-[12px]" label="Timeline" icon={<ClockIcon />} />
              <Tab w="w-[132px]" pl="pl-[12px]" label="Game" icon={<GameIcon />} />
            </TabBar>
            <div className="flex-1 min-h-0 flex flex-col border-2 border-[#2a2a2a] -mt-[2px]">
              <div className="h-[54px] shrink-0 flex items-center justify-end gap-[26px] bg-[#373737] border-b-2 border-[#2a2a2a] pr-[17px]">
                <CopyIcon />
                <BrushIcon />
              </div>
              <div className="flex-1 min-h-0 flex bg-[#383838]">
                <div className="flex-1" />
                <div className="w-[22px] bg-[#3f3f3f]" />
              </div>
            </div>
          </div>
        </div>

        {/* Inspector */}
        <div className="w-[686px] ml-[10px] flex flex-col shrink-0">
          <TabBar h="h-[47px]">
            <Tab w="w-[164px]" active label="Inspector" icon={<InspectorIcon />} />
          </TabBar>
          <div className="flex-1 min-h-0 flex flex-col border-2 border-[#2a2a2a] -mt-[2px]">
            <div className="h-[53px] shrink-0 relative z-10 flex items-center bg-[#373737] border-b-2 border-[#2a2a2a] pl-[8px] pr-[21px]">
              <div className="w-[176px] h-[39px] bg-[#404040] border-2 border-[#505050] flex items-center pl-[4px] gap-[4px] -mt-[2px]">
                <Plus size={30} strokeWidth={2.4} color={GREY} />
                <span>Component</span>
              </div>
              <div className="ml-auto flex items-center">
                <ChevronLeft size={36} strokeWidth={2.2} color={GREY} />
                <div className="ml-[14px]">
                  <ChevronRight size={36} strokeWidth={2.2} color="#6e6e6e" />
                </div>
                <div className="ml-[24px]">
                  <LockIcon />
                </div>
              </div>
            </div>
            <div className="flex-1 min-h-0 flex bg-[#383838]">
              <div className="w-[660px] overflow-hidden flex flex-col shrink-0">
                <div className="-mt-[18px] mb-[9px]">
                  <Row label="Label">
                    <Field>
                      <span className="pt-[2px]">RigidBody</span>
                    </Field>
                  </Row>
                </div>
                <SectionHeader title="RevoluteJoint" icon={<RevoluteIcon />} />
                <div className="pt-[10px] pb-[6px]">
                  <Row label="Self Body"><Ref label="None (RigidBody)" /></Row>
                  <Row label="Other Body"><Ref label="None (RigidBody)" /></Row>
                  <Row label="Anchor"><XY x="0" y="0" /></Row>
                  <Row label="Enable Motor" check h="h-[49px]" />
                  <Row label="Motor Speed"><Num v="0" /></Row>
                  <Row label="Max Motor Force"><Num v="0" /></Row>
                  <Row label="Enable Limit" check h="h-[47px]" />
                  <Row label="Lower Angle"><Num v="0" /></Row>
                  <Row label="Upper Angle"><Num v="0" /></Row>
                  <Row label="Collide Connected" check h="h-[51px]" />
                </div>
                <SectionHeader title="CircleCollider" icon={<div className="w-[28px] h-[28px] rounded-full bg-[#1e88ff]" />} />
                <div className="pt-[9px] pb-[8px]">
                  <Row label="Friction"><Slider left="left-[45px]" v="0.2" /></Row>
                  <Row label="Restitution"><Slider left="left-[1px]" v="0" /></Row>
                  <Row label="Density"><Num v="10" /></Row>
                  <Row label="Is Sensor" check h="h-[48px]" />
                  <Row label="Label"><Field>laya1</Field></Row>
                  <Row label="Offset"><XY x="50" y="50" /></Row>
                  <Row label="Radius"><Num v="50" /></Row>
                </div>
                <SectionHeader title="GearJoint" icon={<GearIcon />} />
                <div className="pt-[10px]">
                  <Row label="Joint1"><Ref label="Box" icon={<BoxNodeIcon />} /></Row>
                  <Row label="Joint2"><Ref label="laya1" icon={<ImageNodeIcon />} /></Row>
                  <Row label="Ratio"><Num v="1" /></Row>
                  <Row label="Collide Connected" check h="h-[49px]" />
                </div>
              </div>
              <div className="flex-1 bg-[#3f3f3f] pt-[845px] px-[2px]">
                <div className="h-[414px] rounded-[9px] bg-[#4b4b4b]" />
              </div>
            </div>
          </div>
        </div>
      </div>

      {/* Annotation arrows over the whole editor */}
      <svg className="absolute inset-0 pointer-events-none" width={2491} height={1450}>
        <Arrow x0={232} y0={289} x1={2058} y1={1261} head="2069,1267 2060,1253 2051,1267" />
        <Arrow x0={241} y0={335} x1={2051} y1={1299} head="2062,1306 2053,1290 2044,1306" />
      </svg>
    </div>
  )
}
